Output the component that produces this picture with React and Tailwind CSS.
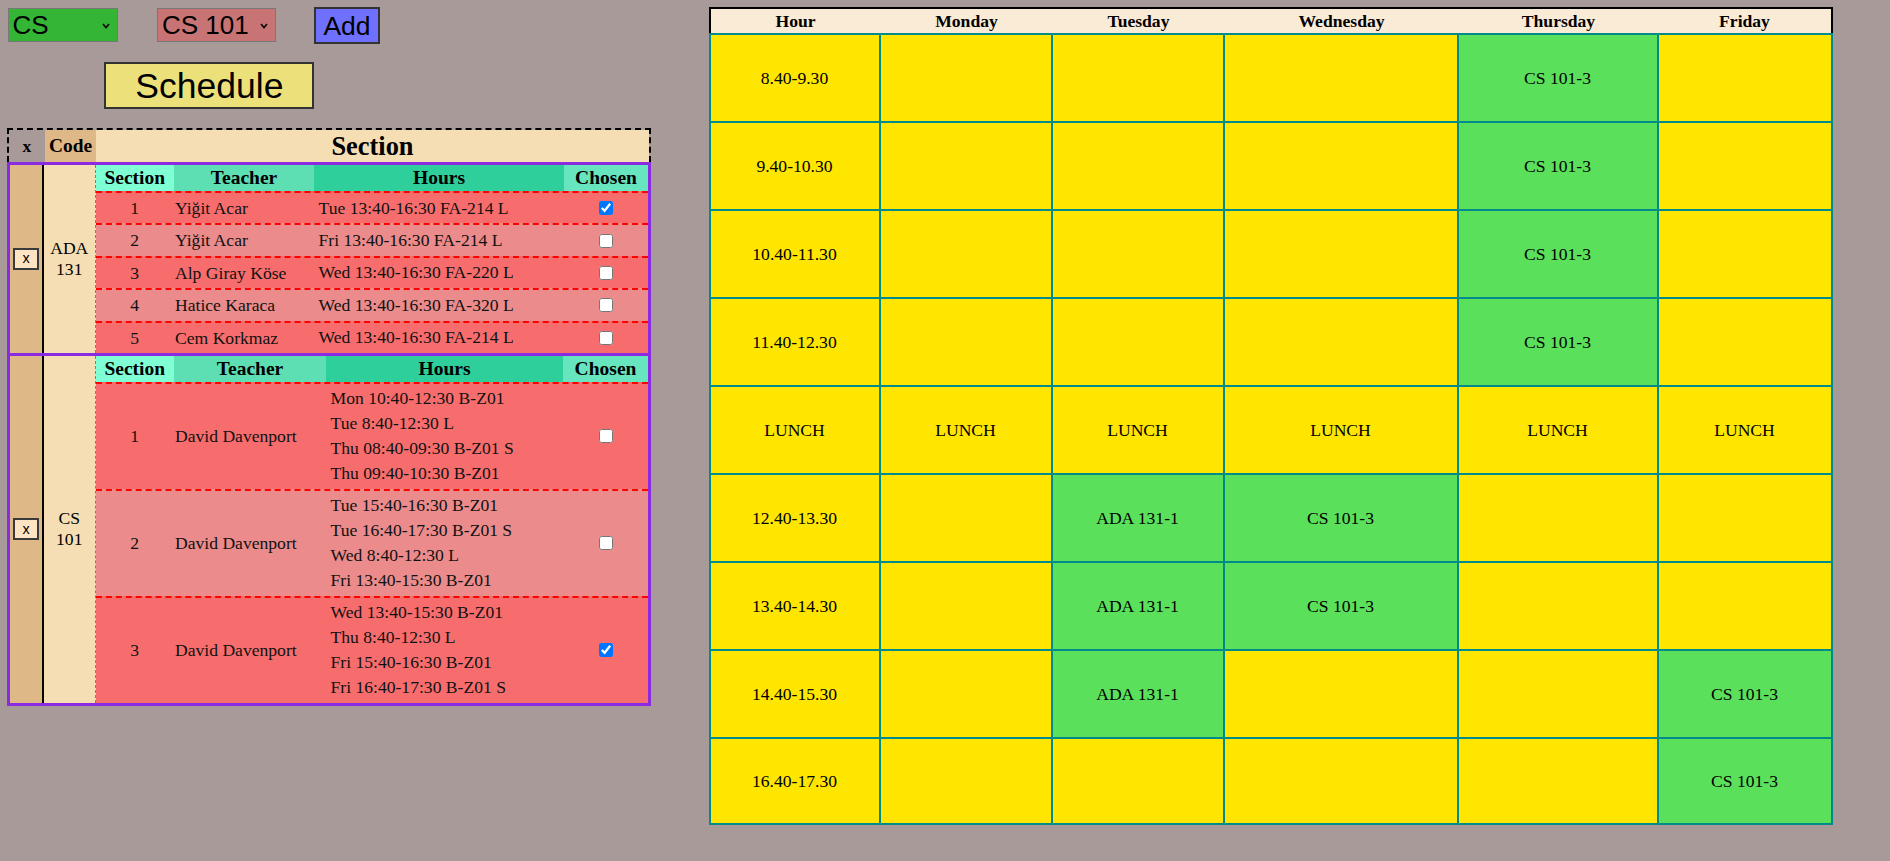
import React from "react";

const sans = "font-['Liberation_Sans',Arial,sans-serif]";

const courses = [
  {
    code: ["ADA", "131"],
    widths: ["w-[78.5px]", "w-[140px]", "w-[250px]"],
    rowH: "h-[32.4px]",
    sections: [
      { n: 1, teacher: "Yiğit Acar", hours: ["Tue 13:40-16:30 FA-214 L"], chosen: true },
      { n: 2, teacher: "Yiğit Acar", hours: ["Fri 13:40-16:30 FA-214 L"] },
      { n: 3, teacher: "Alp Giray Köse", hours: ["Wed 13:40-16:30 FA-220 L"] },
      { n: 4, teacher: "Hatice Karaca", hours: ["Wed 13:40-16:30 FA-320 L"] },
      { n: 5, teacher: "Cem Korkmaz", hours: ["Wed 13:40-16:30 FA-214 L"] },
    ],
  },
  {
    code: ["CS", "101"],
    widths: ["w-[78.5px]", "w-[152px]", "w-[237px]"],
    rowH: "h-[107px]",
    sections: [
      {
        n: 1,
        teacher: "David Davenport",
        hours: ["Mon 10:40-12:30 B-Z01", "Tue 8:40-12:30 L", "Thu 08:40-09:30 B-Z01 S", "Thu 09:40-10:30 B-Z01"],
      },
      {
        n: 2,
        teacher: "David Davenport",
        hours: ["Tue 15:40-16:30 B-Z01", "Tue 16:40-17:30 B-Z01 S", "Wed 8:40-12:30 L", "Fri 13:40-15:30 B-Z01"],
      },
      {
        n: 3,
        teacher: "David Davenport",
        hours: ["Wed 13:40-15:30 B-Z01", "Thu 8:40-12:30 L", "Fri 15:40-16:30 B-Z01", "Fri 16:40-17:30 B-Z01 S"],
        chosen: true,
      },
    ],
  },
];

const days = ["Monday", "Tuesday", "Wednesday", "Thursday", "Friday"];

const grid = [
  ["8.40-9.30", { Thursday: "CS 101-3" }],
  ["9.40-10.30", { Thursday: "CS 101-3" }],
  ["10.40-11.30", { Thursday: "CS 101-3" }],
  ["11.40-12.30", { Thursday: "CS 101-3" }],
  ["LUNCH", null],
  ["12.40-13.30", { Tuesday: "ADA 131-1", Wednesday: "CS 101-3" }],
  ["13.40-14.30", { Tuesday: "ADA 131-1", Wednesday: "CS 101-3" }],
  ["14.40-15.30", { Tuesday: "ADA 131-1", Friday: "CS 101-3" }],
  ["16.40-17.30", { Friday: "CS 101-3" }],
];

function Picker({ label, width, bg, ml }) {
  return (
    <div className={`relative mt-[1px] h-[34px] ${width} ${ml}`}>
      <select
        defaultValue={label}
        className={`${sans} appearance-none w-full h-full ${bg} border border-[#777] pl-[4px] text-[26px] leading-[30px] text-black outline-none`}
      >
        <option>{label}</option>
      </select>
      <svg
        className="absolute right-[8px] top-[15px] pointer-events-none"
        width="8"
        height="6"
        viewBox="0 0 8 6"
      >
        <polyline points="1,1 4,4.5 7,1" fill="none" stroke="#111" strokeWidth="1.8" />
      </svg>
    </div>
  );
}

function CourseBlock({ course, first }) {
  const [wSec, wTeach, wHours] = course.widths;
  return (
    <div
      className={`flex border-[3px] border-[#8a2be2] ${first ? "" : "border-t-0"}`}
    >
      <div className="w-[34px] bg-[#deb887] border-r-2 border-black flex items-center justify-center">
        <button
          className={`${sans} w-[26px] h-[22px] bg-[#ffe4c4] border-2 border-[#3a3a3a] text-[14.5px] leading-[15px] text-black`}
        >
          x
        </button>
      </div>
      <div className="w-[51.5px] bg-[#f5deb3] border-r-[1.5px] border-dashed border-[#d2691e] flex flex-col items-center justify-center text-[17.6px] leading-[21px]">
        <span>{course.code[0]}</span>
        <span>{course.code[1]}</span>
      </div>
      <div className="flex-1 flex flex-col">
        <div className="flex h-[26px] text-[19.5px] font-bold leading-[26px] text-center">
          <div className={`${wSec} bg-[#7fffd4]`}>Section</div>
          <div className={`${wTeach} bg-[#5ddfb3]`}>Teacher</div>
          <div className={`${wHours} bg-[#2ecf9b]`}>Hours</div>
          <div className="flex-1 bg-[#66e5bf]">Chosen</div>
        </div>
        {course.sections.map((s, i) => (
          <div
            key={s.n}
            className={`flex items-center border-t-[2.5px] border-dashed border-[#ff0000] ${course.rowH} ${
              i % 2 === 0 ? "bg-[#f76d6d]" : "bg-[#eb8b8b]"
            } text-[17.6px] text-[#111]`}
          >
            <div className={`${wSec} text-center`}>{s.n}</div>
            <div className={`${wTeach} pl-[1px]`}>{s.teacher}</div>
            <div className={`${wHours} pl-[4.5px] flex flex-col`}>
              {s.hours.map((h) => (
                <div key={h} className={s.hours.length > 1 ? "h-[25px] leading-[25px]" : "leading-[21px]"}>
                  {h}
                </div>
              ))}
            </div>
            <div className="flex-1 flex justify-center">
              <input type="checkbox" defaultChecked={!!s.chosen} className="w-[14px] h-[14px] m-0" />
            </div>
          </div>
        ))}
      </div>
    </div>
  );
}

export default function App() {
  return (
    <div className="min-h-[861px] bg-[#a99a9a] flex font-['Liberation_Serif','Times_New_Roman',serif] text-black">
      {/* left side: pickers and section list */}
      <div className="w-[708px] pt-[7.3px] pl-[7px] flex flex-col items-start">
        <div className="flex items-start">
          <Picker label="CS" width="w-[110px]" bg="bg-[#35b535]" ml="ml-[0.5px]" />
          <Picker label="CS 101" width="w-[119px]" bg="bg-[#c97474]" ml="ml-[39.5px]" />
          <button
            className={`${sans} ml-[38.3px] h-[37px] w-[65.4px] bg-[#7070ff] border-2 border-[#333] text-[26.5px] leading-[30px] text-black`}
          >
            Add
          </button>
        </div>
        <button
          className={`${sans} mt-[18px] ml-[97.4px] w-[210px] h-[47px] bg-[#ece07b] border-2 border-[#333] text-[35.5px] leading-[40px] text-black`}
        >
          Schedule
        </button>

        <div className="mt-[18.7px] w-[644px]">
          <div className="flex h-[34px] border-2 border-b-0 border-dashed border-black font-bold">
            <div className="w-[36px] text-center text-[17.6px] leading-[32px]">x</div>
            <div className="w-[51px] bg-[#deb887] text-center text-[19.4px] leading-[32px]">Code</div>
            <div className="flex-1 bg-[#f5deb3] text-center text-[26.4px] leading-[32px]">Section</div>
          </div>
          {courses.map((c, i) => (
            <CourseBlock key={c.code.join(" ")} course={c} first={i === 0} />
          ))}
        </div>
      </div>

      {/* right side: weekly grid */}
      <div className="pt-[7.3px] pl-[0.5px]">
        <table className="w-[1124px] table-fixed border-separate border-spacing-0 text-[17.6px]">
          <colgroup>
            <col className="w-[172px]" />
            <col className="w-[172px]" />
            <col className="w-[172px]" />
            <col className="w-[234px]" />
            <col className="w-[200px]" />
            <col className="w-[174px]" />
          </colgroup>
          <thead>
            <tr className="h-[25.5px] bg-[#faebd7]">
              <th className="border-t-2 border-l-2 border-black font-bold leading-[22px]">Hour</th>
              {days.map((d, i) => (
                <th
                  key={d}
                  className={`border-t-2 border-black font-bold leading-[22px] ${
                    i === days.length - 1 ? "border-r-2" : ""
                  }`}
                >
                  {d}
                </th>
              ))}
            </tr>
          </thead>
          <tbody>
            {grid.map(([hour, slots], r) => {
              const last = r === grid.length - 1;
              return (
                <tr key={hour} className="h-[88px]">
                  <td
                    className={`bg-[#ffe600] text-center border-t-2 border-l-2 border-r-2 border-[#008b8b] ${
                      last ? "border-b-2" : ""
                    }`}
                  >
                    {hour}
                  </td>
                  {days.map((d) => {
                    const text = slots === null ? "LUNCH" : slots[d] || "";
                    const busy = slots !== null && slots[d];
                    return (
                      <td
                        key={d}
                        className={`${busy ? "bg-[#5be05b]" : "bg-[#ffe600]"} text-center border-t-2 border-r-2 border-[#008b8b] ${
                          last ? "border-b-2" : ""
                        }`}
                      >
                        {text}
                      </td>
                    );
                  })}
                </tr>
              );
            })}
          </tbody>
        </table>
      </div>
    </div>
  );
}
